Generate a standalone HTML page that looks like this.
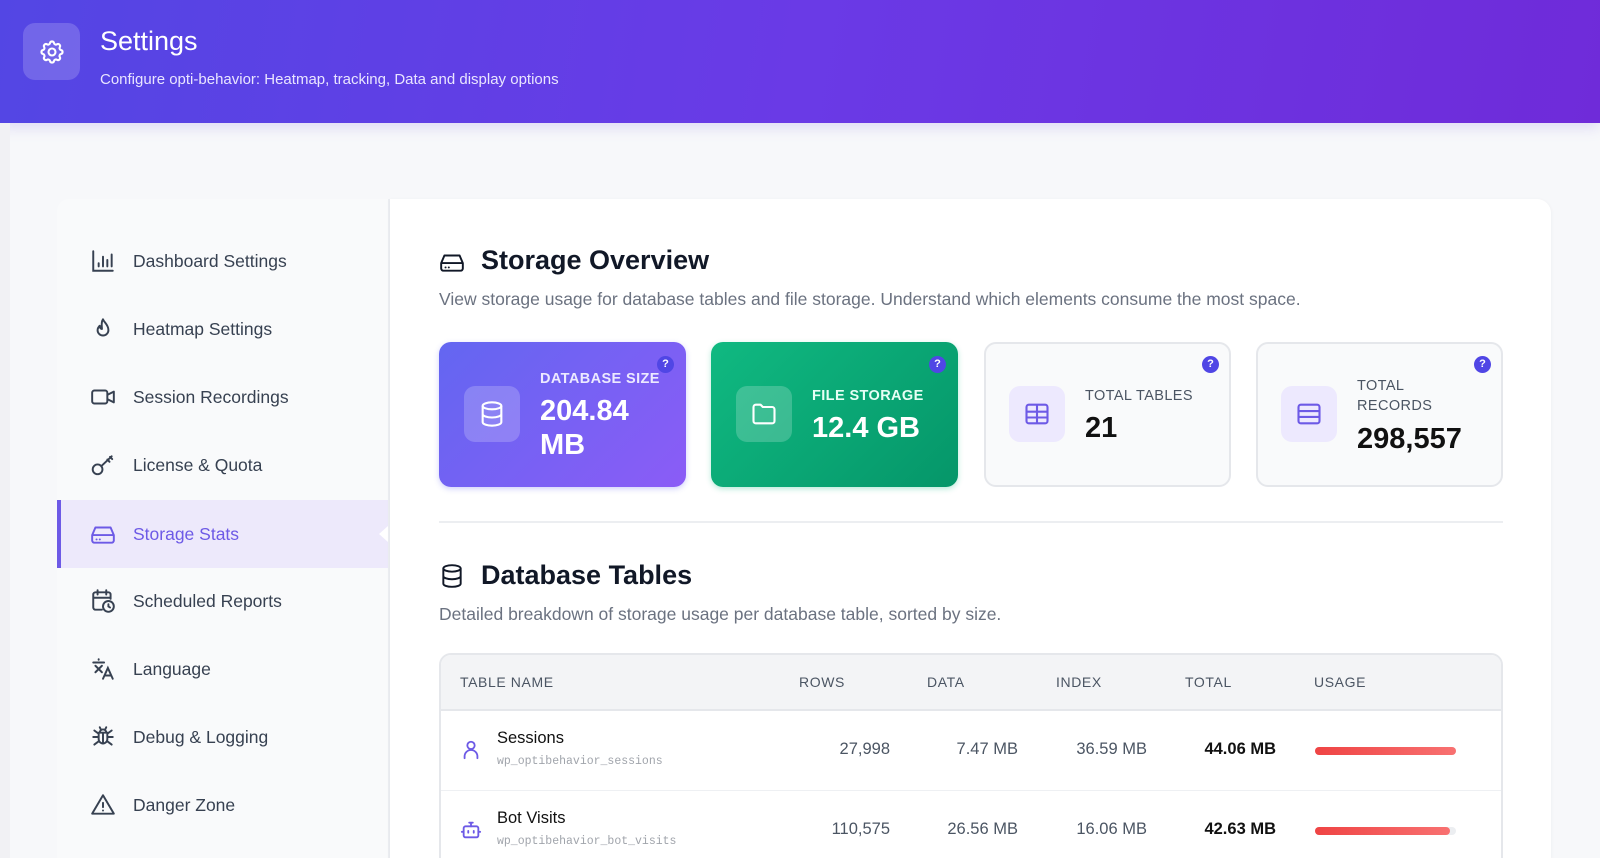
<!DOCTYPE html>
<html><head><meta charset="utf-8"><style>
*{box-sizing:border-box;margin:0;padding:0}
html,body{width:1600px;height:858px;overflow:hidden}
body{background:#f7f8fa;font-family:"Liberation Sans",sans-serif;position:relative}
.hdr{position:absolute;left:0;top:0;width:1600px;height:123px;background:linear-gradient(100deg,#5346e4 0%,#6a3ae6 50%,#6f2bd9 100%);box-shadow:0 4px 14px rgba(99,70,230,.18)}
.gbox{position:absolute;left:23px;top:23px;width:57px;height:57px;border-radius:12px;background:rgba(255,255,255,.18);display:flex;align-items:center;justify-content:center}
.h1{position:absolute;left:100px;top:26px;color:#fff;font-size:27px}
.sub{position:absolute;left:100px;top:71px;color:#e9e5ff;font-size:15px}
.side{position:absolute;left:57px;top:199px;width:333px;height:659px;background:#f9fafb;border-right:2px solid #eceef2;border-radius:12px 0 0 0}
.it{position:absolute;left:0;width:331px;height:68px;display:flex;align-items:center;color:#374151;font-size:17.5px}
.it svg{position:absolute;left:33px}
.it span{position:absolute;left:76px}
.it.act{background:#ede9fb;color:#6d5ae6;border-left:4px solid #6d5ae6}
.it.act svg{left:29px}.it.act span{left:72px}
.main{position:absolute;left:390px;top:199px;width:1161px;height:659px;overflow:hidden;background:#fff;border-radius:0 14px 0 0;box-shadow:0 1px 4px rgba(0,0,0,.05)}
.t2{position:absolute;font-size:27px;font-weight:bold;color:#111827}
.ds{position:absolute;font-size:17.5px;color:#6b7280}
.card{position:absolute;top:143px;width:247px;height:145px;border-radius:12px}
.ib{position:absolute;left:25px;top:44px;width:56px;height:56px;border-radius:11px;display:flex;align-items:center;justify-content:center}
.lb{position:absolute;left:101px;font-size:14.5px;font-weight:bold;letter-spacing:.4px;line-height:20px}
.vl{position:absolute;left:101px;font-size:29px;font-weight:bold;line-height:34px}
.q{position:absolute;right:12px;top:14px;width:17px;height:17px;border-radius:50%;background:#5046e5;color:#fff;font-size:11px;font-weight:bold;text-align:center;line-height:17px}
.tbl{position:absolute;left:49px;top:454px;width:1064px;height:260px;border:2px solid #e5e7eb;border-radius:12px;overflow:hidden}
.th{position:absolute;top:0;left:0;width:100%;height:56px;background:#f3f4f6;border-bottom:2px solid #e5e7eb}
.th span{position:absolute;top:19px;font-size:14px;color:#4b5563;letter-spacing:.6px}
.row{position:absolute;left:0;width:100%;height:80px;border-bottom:1px solid #eef0f3}
.row .n{position:absolute;left:56px;top:18px;font-size:16.5px;color:#111}
.row .m{position:absolute;left:56px;top:44px;font-family:"Liberation Mono",monospace;font-size:11.5px;color:#a0a4ab}
.row .c{position:absolute;top:29px;font-size:16.5px;color:#4b5563;text-align:right;width:120px}
.bar{position:absolute;left:874px;top:36px;width:141px;height:8px;border-radius:4px;background:#eceef1}
.bar i{display:block;height:8px;border-radius:4px;background:linear-gradient(90deg,#ef4444,#f87171)}
</style></head><body>
<div class="hdr">
 <div class="gbox"><svg width="28" height="28" viewBox="0 0 24 24" fill="none" stroke="#fff" stroke-width="1.8" stroke-linecap="round" stroke-linejoin="round"><path d="M10.3 4.3c.4-1.8 3-1.8 3.4 0a1.7 1.7 0 0 0 2.6 1.1c1.5-.9 3.3.8 2.4 2.4a1.7 1.7 0 0 0 1 2.5c1.8.4 1.8 3 0 3.4a1.7 1.7 0 0 0-1 2.6c.9 1.5-.9 3.3-2.4 2.4a1.7 1.7 0 0 0-2.6 1c-.4 1.8-3 1.8-3.4 0a1.7 1.7 0 0 0-2.6-1c-1.5.9-3.3-.9-2.4-2.4a1.7 1.7 0 0 0-1-2.6c-1.8-.4-1.8-3 0-3.4a1.7 1.7 0 0 0 1-2.5c-.9-1.6.9-3.3 2.4-2.4a1.7 1.7 0 0 0 2.6-1.1z"/><circle cx="12" cy="12" r="3"/></svg></div>
 <div class="h1">Settings</div>
 <div class="sub">Configure opti-behavior: Heatmap, tracking, Data and display options</div>
</div>
<div style="position:absolute;left:0;top:123px;width:10px;height:735px;background:#f1f1f4"></div>

<div class="side">
 <div class="it" style="top:28px"><svg width="26" height="26" viewBox="0 0 24 24" fill="none" stroke="#374151" stroke-width="1.8" stroke-linecap="round"><path d="M3 3v18h18M8 17v-3M12 17V8M16 17v-6M20 17V6"/></svg><span>Dashboard Settings</span></div>
 <div class="it" style="top:96px"><svg width="26" height="26" viewBox="0 0 24 24" fill="none" stroke="#374151" stroke-width="1.8" stroke-linecap="round" stroke-linejoin="round"><path d="M12 3c1 3 5 5 5 10a5 5 0 0 1-10 0c0-2 1-3 2-4 0 2 1 3 2 3 0-3-1-6 1-9z"/></svg><span>Heatmap Settings</span></div>
 <div class="it" style="top:164px"><svg width="26" height="26" viewBox="0 0 24 24" fill="none" stroke="#374151" stroke-width="1.8" stroke-linejoin="round"><rect x="2" y="6" width="14" height="12" rx="2"/><path d="M16 10l6-3v10l-6-3"/></svg><span>Session Recordings</span></div>
 <div class="it" style="top:232px"><svg width="26" height="26" viewBox="0 0 24 24" fill="none" stroke="#374151" stroke-width="1.8" stroke-linecap="round"><circle cx="7" cy="16" r="4.5"/><path d="M10.5 13L20 4M16 7l2 2M18.5 4.5l2 2"/></svg><span>License &amp; Quota</span></div>
 <div class="it act" style="top:301px"><svg width="26" height="26" viewBox="0 0 24 24" fill="none" stroke="#6d5ae6" stroke-width="1.8" stroke-linejoin="round"><path d="M2 13l3-7h14l3 7v5a2 2 0 0 1-2 2H4a2 2 0 0 1-2-2z M2 13h20"/><path d="M6 17h.1M9 17h.1" stroke-linecap="round"/></svg><span>Storage Stats</span><div style="position:absolute;right:0;top:26px;width:0;height:0;border-top:8px solid transparent;border-bottom:8px solid transparent;border-right:9px solid #fff"></div></div>
 <div class="it" style="top:368px"><svg width="26" height="26" viewBox="0 0 24 24" fill="none" stroke="#374151" stroke-width="1.8" stroke-linecap="round"><path d="M11 20H5a2 2 0 0 1-2-2V6a2 2 0 0 1 2-2h12a2 2 0 0 1 2 2v4M3 9h16M7 2v4M15 2v4"/><circle cx="17" cy="17" r="5"/><path d="M17 15v2l1.5 1"/></svg><span>Scheduled Reports</span></div>
 <div class="it" style="top:436px"><svg width="26" height="26" viewBox="0 0 24 24" fill="none" stroke="#374151" stroke-width="1.8" stroke-linecap="round"><path d="M3 6h10M8 3v.5M5 9l6 6M11 9l-6 6M12 21l4.5-10 4.5 10M13.5 18h6"/></svg><span>Language</span></div>
 <div class="it" style="top:504px"><svg width="26" height="26" viewBox="0 0 24 24" fill="none" stroke="#374151" stroke-width="1.8" stroke-linecap="round"><path d="M8 8h8v6a4 4 0 0 1-8 0zM9 8a3 3 0 0 1 6 0M12 8v10M3 12h5M16 12h5M4 6l4 3M20 6l-4 3M4 19l4-3M20 19l-4-3M9 3l1 2M15 3l-1 2"/></svg><span>Debug &amp; Logging</span></div>
 <div class="it" style="top:572px"><svg width="26" height="26" viewBox="0 0 24 24" fill="none" stroke="#374151" stroke-width="1.8" stroke-linecap="round" stroke-linejoin="round"><path d="M12 3L2 20h20z"/><path d="M12 10v4M12 17v.1"/></svg><span>Danger Zone</span></div>
</div>

<div class="main">
 <svg style="position:absolute;left:49px;top:50px" width="26" height="26" viewBox="0 0 24 24" fill="none" stroke="#111827" stroke-width="1.8" stroke-linejoin="round"><path d="M2 13l3-7h14l3 7v5a2 2 0 0 1-2 2H4a2 2 0 0 1-2-2z M2 13h20"/><path d="M6 17h.1M9 17h.1" stroke-linecap="round"/></svg>
 <div class="t2" style="left:91px;top:46px">Storage Overview</div>
 <div class="ds" style="left:49px;top:90px">View storage usage for database tables and file storage. Understand which elements consume the most space.</div>

 <div class="card" style="left:49px;background:linear-gradient(135deg,#6366f1,#8b5cf6);box-shadow:0 2px 6px rgba(99,102,241,.3)">
  <div class="ib" style="background:rgba(255,255,255,.2)"><svg width="28" height="28" viewBox="0 0 24 24" fill="none" stroke="#fff" stroke-width="1.8"><ellipse cx="12" cy="5" rx="8" ry="3"/><path d="M4 5v14c0 1.7 3.6 3 8 3s8-1.3 8-3V5M4 12c0 1.7 3.6 3 8 3s8-1.3 8-3"/></svg></div>
  <div class="lb" style="top:27px;color:#ece9ff">DATABASE SIZE</div>
  <div class="vl" style="top:52px;color:#fff">204.84<br>MB</div>
  <div class="q">?</div>
 </div>
 <div class="card" style="left:321px;background:linear-gradient(135deg,#10b981,#059669);box-shadow:0 2px 6px rgba(16,185,129,.3)">
  <div class="ib" style="background:rgba(255,255,255,.2)"><svg width="28" height="28" viewBox="0 0 24 24" fill="none" stroke="#fff" stroke-width="1.8" stroke-linejoin="round"><path d="M3 6a2 2 0 0 1 2-2h4l2 2h8a2 2 0 0 1 2 2v10a2 2 0 0 1-2 2H5a2 2 0 0 1-2-2z"/></svg></div>
  <div class="lb" style="top:44px;color:#e6fff5">FILE STORAGE</div>
  <div class="vl" style="top:69px;color:#fff">12.4 GB</div>
  <div class="q">?</div>
 </div>
 <div class="card" style="left:594px;background:#f9fafb;border:2px solid #e5e7eb">
  <div class="ib" style="background:#ede9fe;left:23px;top:42px"><svg width="28" height="28" viewBox="0 0 24 24" fill="none" stroke="#6d5ae6" stroke-width="1.8"><rect x="3" y="4" width="18" height="16" rx="2"/><path d="M3 10h18M3 15h18M12 4v16"/></svg></div>
  <div class="lb" style="top:42px;left:99px;color:#4b5563;font-weight:normal">TOTAL TABLES</div>
  <div class="vl" style="top:67px;left:99px;color:#111">21</div>
  <div class="q" style="right:10px;top:12px">?</div>
 </div>
 <div class="card" style="left:866px;background:#f9fafb;border:2px solid #e5e7eb">
  <div class="ib" style="background:#ede9fe;left:23px;top:42px"><svg width="28" height="28" viewBox="0 0 24 24" fill="none" stroke="#6d5ae6" stroke-width="1.8"><rect x="3" y="4" width="18" height="16" rx="2"/><path d="M3 9.5h18M3 14.5h18"/></svg></div>
  <div class="lb" style="top:32px;left:99px;color:#4b5563;font-weight:normal">TOTAL<br>RECORDS</div>
  <div class="vl" style="top:78px;left:99px;color:#111">298,557</div>
  <div class="q" style="right:10px;top:12px">?</div>
 </div>

 <div style="position:absolute;left:49px;top:322px;width:1064px;height:2px;background:#eceef1"></div>
 <svg style="position:absolute;left:49px;top:364px" width="26" height="26" viewBox="0 0 24 24" fill="none" stroke="#111827" stroke-width="1.8"><ellipse cx="12" cy="5" rx="8" ry="3"/><path d="M4 5v14c0 1.7 3.6 3 8 3s8-1.3 8-3V5M4 12c0 1.7 3.6 3 8 3s8-1.3 8-3"/></svg>
 <div class="t2" style="left:91px;top:361px">Database Tables</div>
 <div class="ds" style="left:49px;top:405px">Detailed breakdown of storage usage per database table, sorted by size.</div>

 <div class="tbl">
  <div class="th"><span style="left:19px">TABLE NAME</span><span style="left:358px">ROWS</span><span style="left:486px">DATA</span><span style="left:615px">INDEX</span><span style="left:744px">TOTAL</span><span style="left:873px">USAGE</span></div>
  <div class="row" style="top:56px">
   <svg style="position:absolute;left:19px;top:28px" width="22" height="22" viewBox="0 0 24 24" fill="none" stroke="#6d5ae6" stroke-width="2" stroke-linecap="round"><circle cx="12" cy="7" r="4"/><path d="M5 21v-2a6 6 0 0 1 14 0v2"/></svg>
   <div class="n">Sessions</div><div class="m">wp_optibehavior_sessions</div>
   <div class="c" style="left:329px">27,998</div><div class="c" style="left:457px">7.47 MB</div><div class="c" style="left:586px">36.59 MB</div><div class="c" style="left:715px;color:#111;font-weight:bold">44.06 MB</div>
   <div class="bar"><i style="width:100%"></i></div>
  </div>
  <div class="row" style="top:136px">
   <svg style="position:absolute;left:19px;top:28px" width="22" height="22" viewBox="0 0 24 24" fill="none" stroke="#6d5ae6" stroke-width="2" stroke-linecap="round"><rect x="4" y="8" width="16" height="12" rx="2"/><path d="M12 8V4M10 4h4M2 14h2M20 14h2M9 13v2M15 13v2"/></svg>
   <div class="n">Bot Visits</div><div class="m">wp_optibehavior_bot_visits</div>
   <div class="c" style="left:329px">110,575</div><div class="c" style="left:457px">26.56 MB</div><div class="c" style="left:586px">16.06 MB</div><div class="c" style="left:715px;color:#111;font-weight:bold">42.63 MB</div>
   <div class="bar"><i style="width:96%"></i></div>
  </div>
 </div>
</div>
</body></html>
